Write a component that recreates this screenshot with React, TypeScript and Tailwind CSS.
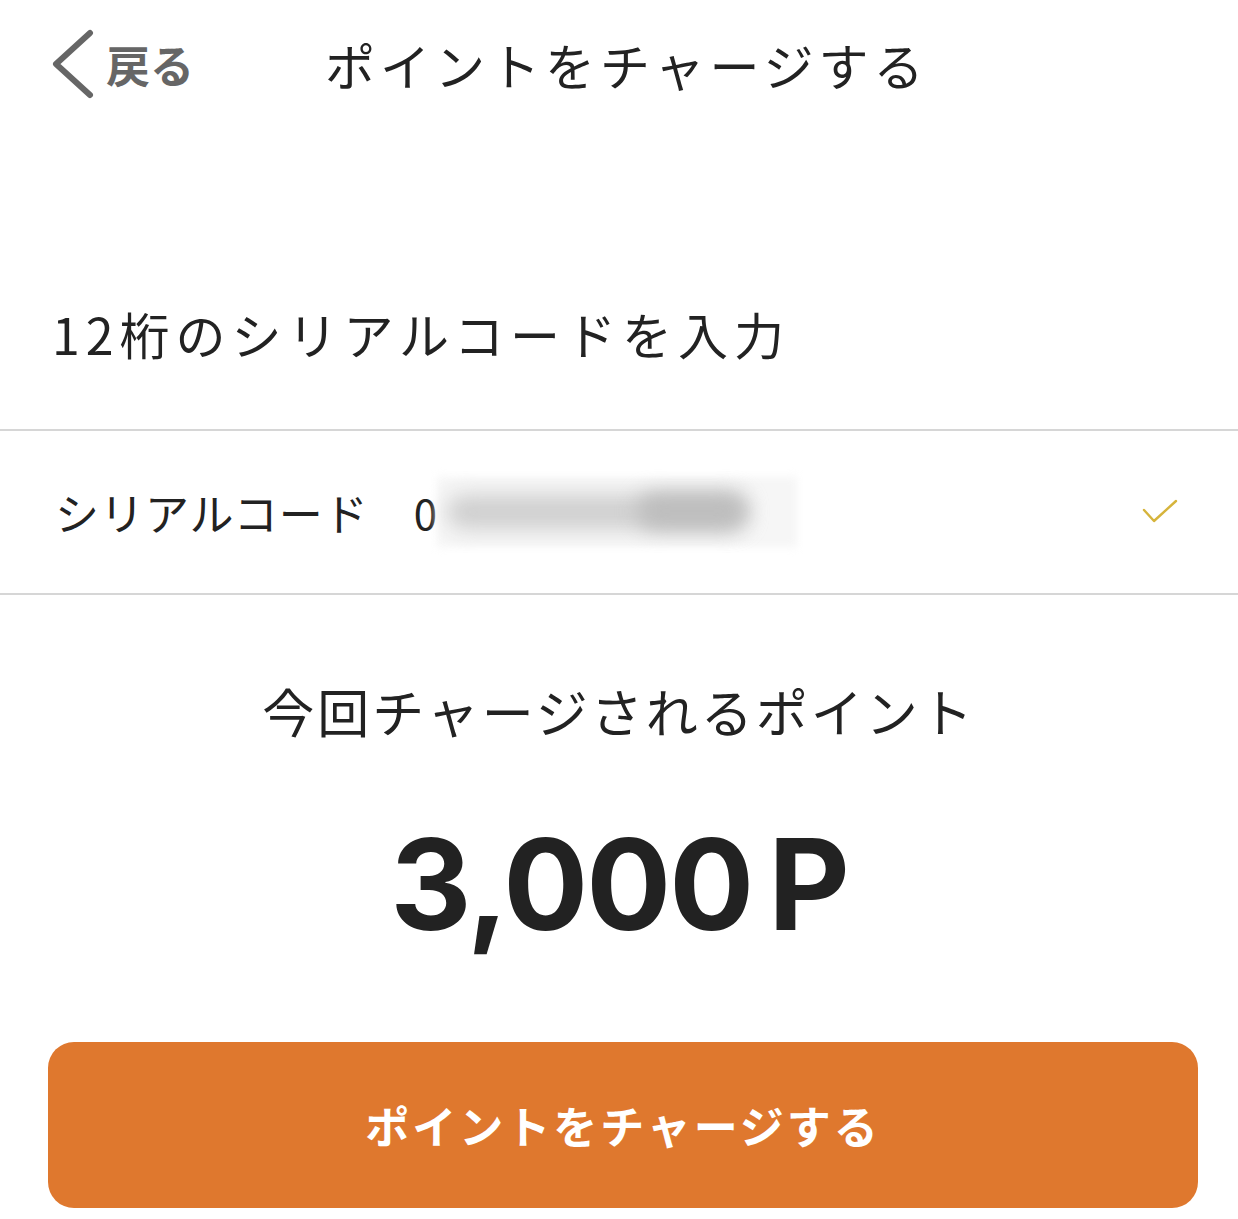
const jp = { fontFamily: '"Noto Sans CJK JP", "Noto Sans", sans-serif' };

export default function App() {
  return (
    <div className="w-[1238px] h-[1219px] bg-white text-[#222]" style={jp}>
      {/* header */}
      <div className="flex items-center h-[126px] pt-[2px] pl-[50px]">
        <div className="flex items-center text-[#666] w-[275px]">
          <svg width="46" height="70" viewBox="0 0 46 70" fill="none" className="mr-[10px]">
            <polyline points="40,4 6,35 40,66" stroke="#666" strokeWidth="6" strokeLinecap="round" strokeLinejoin="round" />
          </svg>
          <span className="text-[44px] font-bold leading-none">戻る</span>
        </div>
        <h1 className="text-[50px] tracking-[5px] leading-none font-normal">ポイントをチャージする</h1>
      </div>

      {/* section label */}
      <div className="pt-[182px] pb-[71px] pl-[52px]">
        <p className="text-[50px] tracking-[6px] leading-none">12桁のシリアルコードを入力</p>
      </div>

      {/* serial row */}
      <div className="flex items-center h-[166px] border-y-[2px] border-[#d6d6d6] pl-[55px] pr-[60px]">
        <span className="text-[44px] tracking-[1px] leading-none">シリアルコード</span>
        <span className="ml-[45px] text-[42px] leading-none">0</span>
        <div className="relative w-[360px] h-[70px]">
          <div className="absolute inset-0 bg-[#f6f6f6] blur-[4px]" />
          <div className="absolute left-[10px] top-[18px] w-[300px] h-[34px] rounded-full bg-[#cfcfcf] blur-[10px]" />
          <div className="absolute left-[200px] top-[16px] w-[110px] h-[36px] rounded-full bg-[#bdbdbd] blur-[10px]" />
        </div>
        <div className="ml-auto">
          <svg width="36" height="26" viewBox="0 0 36 26" fill="none">
            <polyline points="2,11 12,22 34,2" stroke="#d6b43c" strokeWidth="2.4" strokeLinecap="round" strokeLinejoin="round" />
          </svg>
        </div>
      </div>

      {/* points */}
      <div className="flex flex-col items-center pt-[90px]">
        <p className="text-[52px] tracking-[3px] leading-none">今回チャージされるポイント</p>
        <p
          className="mt-[84px] text-[126px] font-bold leading-none tracking-[-2px] text-[#222]"
          style={{ fontFamily: 'Inter, "Liberation Sans", sans-serif' }}
        >
          3,000<span className="ml-[16px]">P</span>
        </p>
      </div>

      {/* button */}
      <div className="pl-[48px] pr-[40px] pt-[95px]">
        <button className="w-full h-[166px] rounded-[26px] bg-[#df782e] text-white text-[44px] font-bold tracking-[3px] flex items-center justify-center">
          ポイントをチャージする
        </button>
      </div>
    </div>
  );
}
